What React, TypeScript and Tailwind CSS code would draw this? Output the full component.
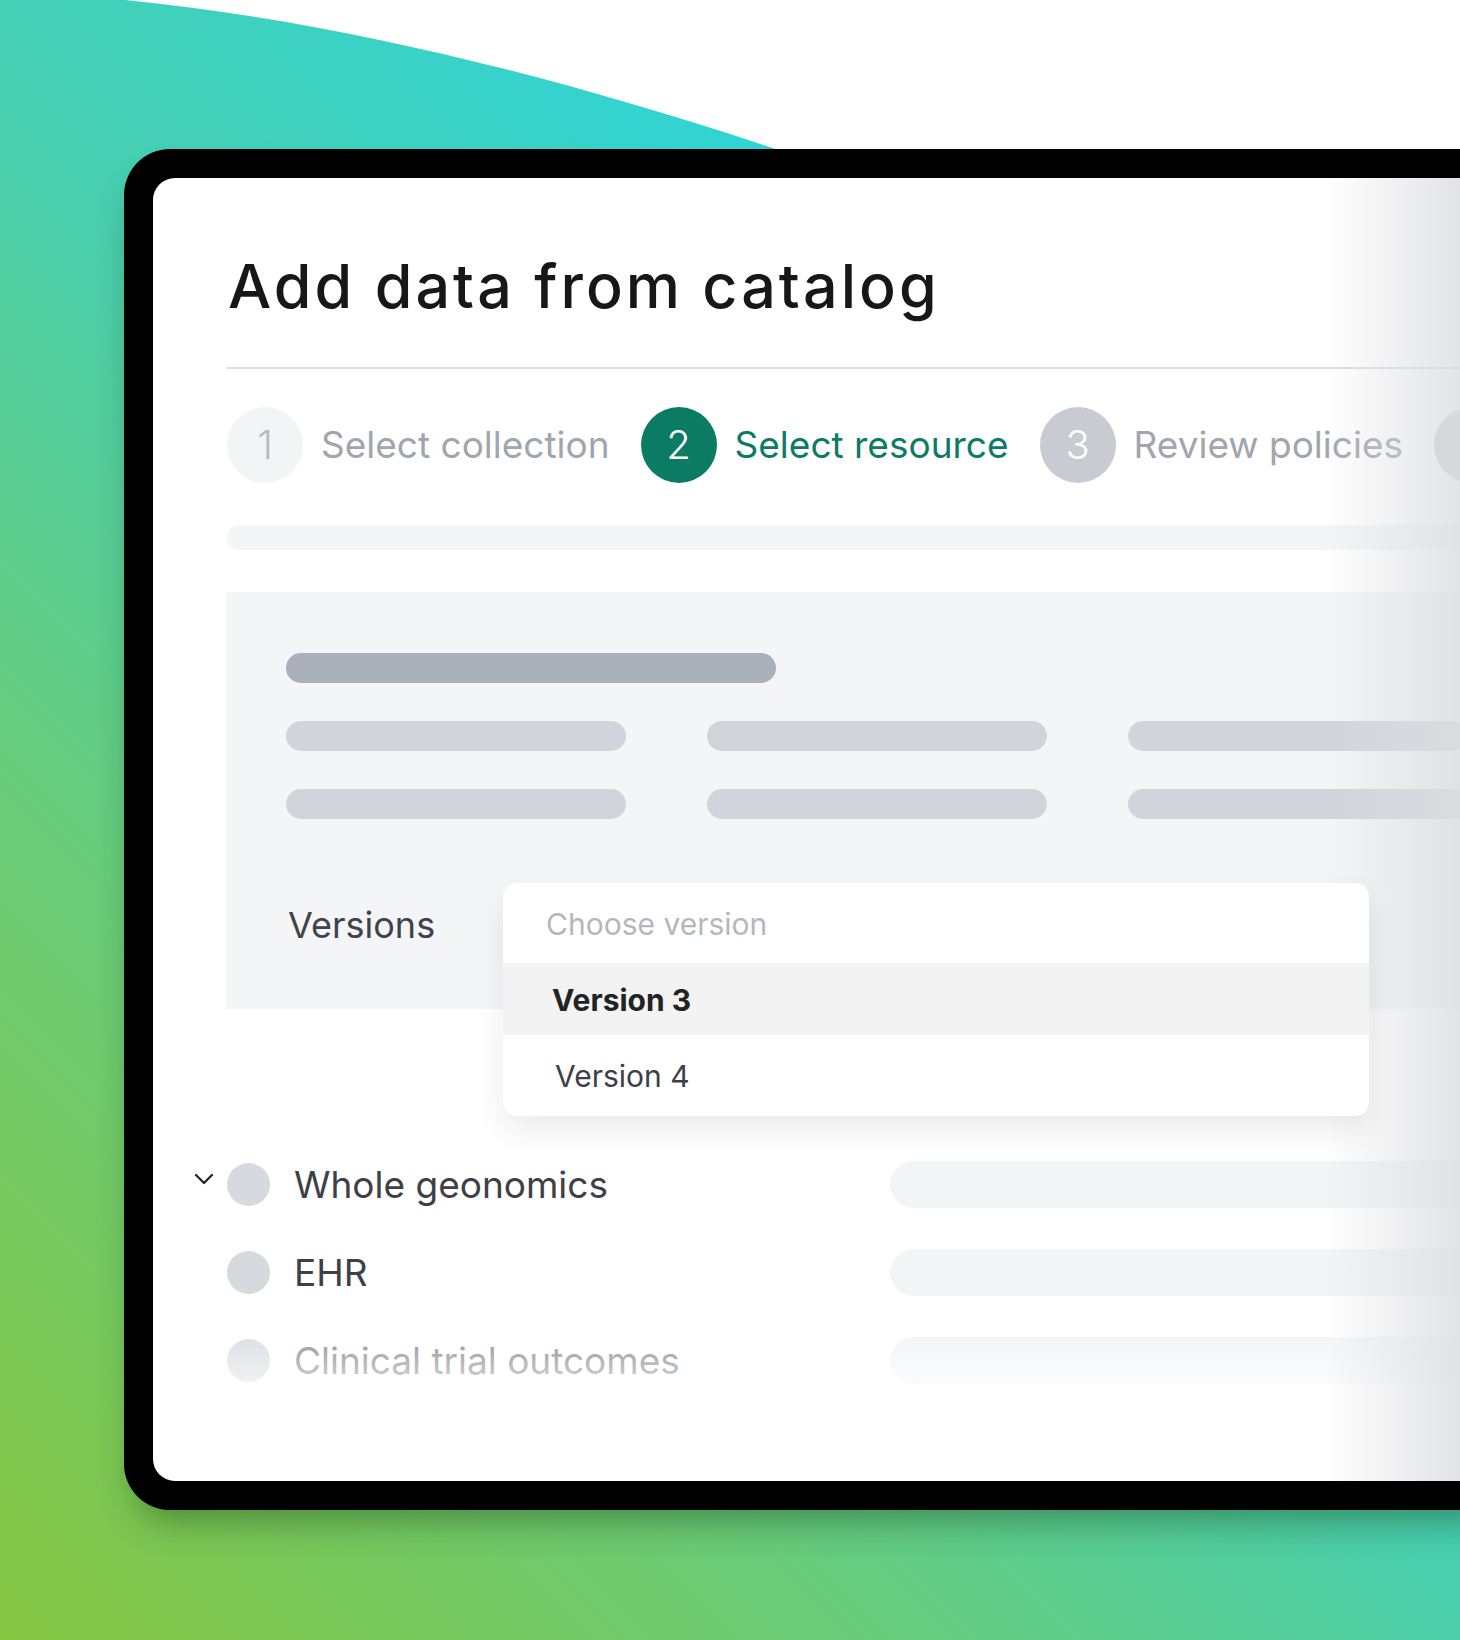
import React from "react";

function Chevron() {
  return (
    <svg width="20" height="12" viewBox="0 0 20 12" fill="none">
      <path d="M2 2 L10 10 L18 2" stroke="#1f1f1f" strokeWidth="2.2" strokeLinecap="round" strokeLinejoin="round" />
    </svg>
  );
}

function Step({ n, label, state }: { n: string; label?: string; state: "done" | "active" | "todo" }) {
  const circle =
    state === "active"
      ? "bg-[#0c7b64] text-white"
      : state === "done"
      ? "bg-[#f3f4f6] text-[#b5bac1]"
      : "bg-[#c8ccd2] text-white";
  const text = state === "active" ? "text-[#0c7b64]" : "text-[#a0a6ae]";
  return (
    <div className="flex shrink-0 items-center gap-[18px]">
      <div className={`flex h-[76px] w-[76px] shrink-0 items-center justify-center rounded-full text-[40px] font-light ${circle}`}>
        {n}
      </div>
      {label ? <span className={`whitespace-nowrap text-[37px] ${text}`}>{label}</span> : null}
    </div>
  );
}

function Row({ label, chevron, faded }: { label: string; chevron?: boolean; faded?: boolean }) {
  return (
    <div className="flex h-[47px] items-center pl-[34px]">
      <div className="flex w-[703px] shrink-0 items-center">
        <div className="flex w-[40px] items-center justify-start pl-[7px] -mt-[12px]">{chevron ? <Chevron /> : null}</div>
        <div className="h-[43px] w-[43px] shrink-0 rounded-full bg-[#d6d9de]" />
        <span className={`ml-[24px] whitespace-nowrap text-[37px] ${faded ? "text-[#7d8187]" : "text-[#3d4046]"}`}>{label}</span>
      </div>
      <div className="h-[47px] flex-1 rounded-l-full bg-[#f3f4f6]" />
    </div>
  );
}

export default function App() {
  return (
    <div className="relative h-[1640px] w-[1460px] overflow-hidden bg-white font-['Inter',sans-serif]">
      <svg className="absolute left-0 top-0" width="1460" height="1640" viewBox="0 0 1460 1640">
        <defs>
          <linearGradient id="bg" gradientUnits="userSpaceOnUse" x1="0" y1="1640" x2="1550" y2="90">
            <stop offset="0" stopColor="#86c541" />
            <stop offset="0.27" stopColor="#6acb78" />
            <stop offset="0.5" stopColor="#48cfb0" />
            <stop offset="0.73" stopColor="#30d4d4" />
            <stop offset="1" stopColor="#22d6e6" />
          </linearGradient>
        </defs>
        <path d="M0 0 L125 0 C350 22 600 85 880 185 L1460 185 L1460 1640 L0 1640 Z" fill="url(#bg)" />
      </svg>

      <div className="relative pl-[124px] pt-[149px]">
        <div className="h-[1361px] w-[1420px] rounded-[46px] bg-black p-[29px] shadow-[0_22px_36px_-12px_rgba(20,60,20,0.45)]">
          <div className="relative h-full overflow-hidden rounded-[22px] bg-white pt-[78px]">
            <h1 className="pl-[75px] text-[61px] font-medium leading-[60px] tracking-[0.05em] text-[#171717]">
              Add data from catalog
            </h1>
            <div className="ml-[73px] mt-[51px] h-[2px] bg-[#dcdee1]" />

            <div className="mt-[38px] flex items-center gap-[31px] pl-[74px]">
              <Step n="1" label="Select collection" state="done" />
              <Step n="2" label="Select resource" state="active" />
              <Step n="3" label="Review policies" state="todo" />
              <Step n="4" state="todo" />
            </div>

            <div className="ml-[74px] mt-[42px] h-[25px] rounded-l-full bg-[#f4f5f7]" />

            <div className="ml-[73px] mt-[42px] bg-[#f3f5f7] pb-[46px] pl-[60px] pt-[61px]">
              <div className="h-[30px] w-[490px] rounded-full bg-[#a9b0ba]" />
              <div className="mt-[38px] flex gap-[81px]">
                <div className="h-[30px] w-[340px] shrink-0 rounded-full bg-[#d1d5db]" />
                <div className="h-[30px] w-[340px] shrink-0 rounded-full bg-[#d1d5db]" />
                <div className="h-[30px] w-[340px] shrink-0 rounded-full bg-[#d1d5db]" />
              </div>
              <div className="mt-[38px] flex gap-[81px]">
                <div className="h-[30px] w-[340px] shrink-0 rounded-full bg-[#d1d5db]" />
                <div className="h-[30px] w-[340px] shrink-0 rounded-full bg-[#d1d5db]" />
                <div className="h-[30px] w-[340px] shrink-0 rounded-full bg-[#d1d5db]" />
              </div>

              <div className="mt-[64px] flex items-start">
                <div className="flex h-[80px] w-[217px] items-center pl-[2px] pt-[4px] text-[36px] text-[#3f4349]">Versions</div>
                <div className="relative z-10 h-[80px] w-[866px]">
                  <div className="absolute left-0 top-0 w-full overflow-hidden rounded-[14px] bg-white shadow-[0_14px_30px_rgba(0,0,0,0.08)]">
                    <div className="flex h-[80px] items-center pl-[43px] pt-[2px] text-[30px] text-[#b4b8be]">Choose version</div>
                    <div className="flex h-[72px] items-center bg-[#f3f3f3] pl-[49px] pt-[2px] text-[30px] font-bold text-[#222325]">Version 3</div>
                    <div className="flex h-[81px] items-center pl-[52px] pt-[2px] text-[30px] text-[#3d4046]">Version 4</div>
                  </div>
                </div>
              </div>
            </div>

            <div className="mt-[152px] flex flex-col gap-[41px]">
              <Row label="Whole geonomics" chevron />
              <Row label="EHR" />
              <Row label="Clinical trial outcomes" faded />
            </div>

            <div className="absolute left-0 top-[1140px] h-[100px] w-full bg-gradient-to-b from-white/0 to-white" />
          </div>
        </div>
      </div>

      <div className="absolute left-[1325px] top-[178px] h-[1303px] w-[135px] bg-gradient-to-r from-[#dcdde0]/0 to-[#dcdde0]/80" />
    </div>
  );
}
